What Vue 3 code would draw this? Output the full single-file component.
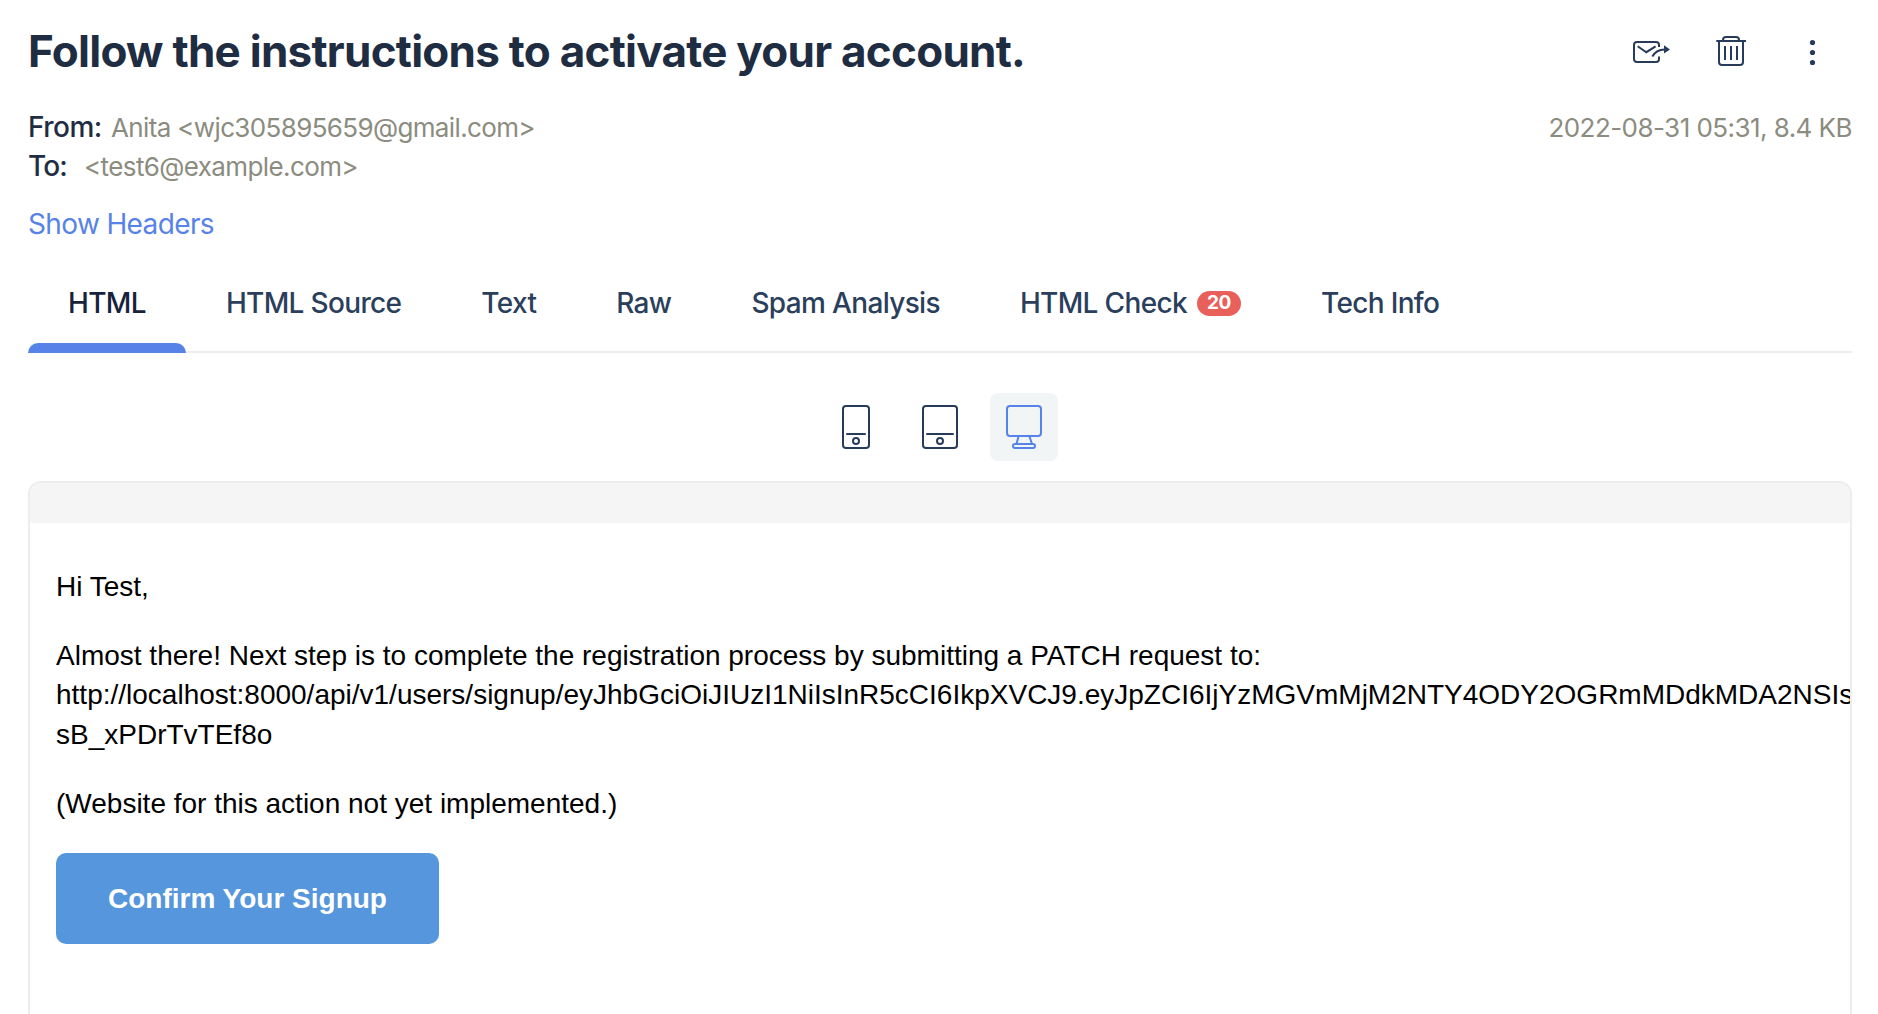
<script setup>
const tabs = [
  { label: 'HTML', active: true },
  { label: 'HTML Source' },
  { label: 'Text' },
  { label: 'Raw' },
  { label: 'Spam Analysis' },
  { label: 'HTML Check', badge: 20 },
  { label: 'Tech Info' },
]
const url =
  'http://localhost:8000/api/v1/users/signup/eyJhbGciOiJIUzI1NiIsInR5cCI6IkpXVCJ9.eyJpZCI6IjYzMGVmMjM2NTY4ODY2OGRmMDdkMDA2NSIs'
</script>

<template>
  <main class="page">
    <header class="head">
      <h1>Follow the instructions to activate your account.</h1>
      <div class="actions">
        <button aria-label="Forward">
          <svg width="40" height="40" viewBox="-2 0 40 40">
            <path d="M27 15V13a3 3 0 0 0-3-3H5a3 3 0 0 0-3 3v14a3 3 0 0 0 3 3h19a3 3 0 0 0 3-3v-2.5" />
            <path d="M5.7 14.3 14.3 20.2 23.6 14.3" />
            <path d="M20.3 24.4C22.8 20.2 27 17.4 32.5 17.4" />
            <path class="solid" d="M32 13.2 38 17.4 32 21.6z" />
          </svg>
        </button>
        <button aria-label="Delete">
          <svg width="40" height="40" viewBox="0 0 40 40">
            <path d="M5.3 9h29.700M12 9V8a3 3 0 0 1 3-3h10a3 3 0 0 1 3 3v1M8 9v21a3 3 0 0 0 3 3h18a3 3 0 0 0 3-3V9M14 14v14M20 14v14M26 14v14" />
          </svg>
        </button>
        <button aria-label="More">
          <svg width="40" height="40" viewBox="0 0 40 40">
            <circle class="dot" cx="20.5" cy="10.5" r="2.6" />
            <circle class="dot" cx="20.5" cy="20.5" r="2.6" />
            <circle class="dot" cx="20.5" cy="30.5" r="2.6" />
          </svg>
        </button>
      </div>
    </header>

    <section class="meta">
      <dl>
        <div class="from"><dt>From:</dt><dd>Anita &lt;wjc305895659@gmail.com&gt;</dd></div>
        <div class="to"><dt>To:</dt><dd>&lt;test6@example.com&gt;</dd></div>
      </dl>
      <span class="date">2022-08-31 05:31, 8.4 KB</span>
    </section>
    <a class="show">Show Headers</a>

    <nav class="tabs">
      <a v-for="t in tabs" :key="t.label" class="tab" :class="{ active: t.active }">
        <span>{{ t.label }}</span>
        <span v-if="t.badge" class="badge">{{ t.badge }}</span>
      </a>
    </nav>

    <div class="devices">
      <button aria-label="Phone">
        <svg width="68" height="68" viewBox="0 0 68 68">
          <rect x="21" y="13" width="26" height="42" rx="3" />
          <path d="M25 41h18" stroke-linecap="round" />
          <circle cx="34" cy="48" r="3" />
        </svg>
      </button>
      <button aria-label="Tablet">
        <svg width="68" height="68" viewBox="0 0 68 68">
          <rect x="17" y="13" width="34" height="42" rx="3" />
          <path d="M21 41h26" stroke-linecap="round" />
          <circle cx="34" cy="48" r="3" />
        </svg>
      </button>
      <button class="on" aria-label="Desktop">
        <svg width="68" height="68" viewBox="0 0 68 68">
          <rect x="17" y="13" width="34" height="30" rx="3" />
          <path d="M28.5 43.5 26.5 51M39.5 43.5 42 51" />
          <rect x="23" y="51" width="22" height="4" rx="2" />
        </svg>
      </button>
    </div>

    <article class="panel">
      <div class="bar"></div>
      <div class="mail">
        <p>Hi Test,</p>
        <p>
          Almost there! Next step is to complete the registration process by submitting a PATCH request to:<br />
          {{ url }}<br />
          sB_xPDrTvTEf8o
        </p>
        <p>(Website for this action not yet implemented.)</p>
        <a class="cta">Confirm Your Signup</a>
      </div>
    </article>
  </main>
</template>

<style>
body { background: #fff; overflow: hidden; }
</style>

<style scoped>
.page {
  box-sizing: border-box;
  width: 100%;
  height: 1014px;
  padding: 24px 26px 0 28px;
  overflow: hidden;
  display: flex;
  flex-direction: column;
  font-family: Inter, sans-serif;
  font-size: 28px;
  color: #1f2d42;
}
button { padding: 0; border: 0; background: none; display: block; }
svg { display: block; fill: none; stroke: #273c5a; stroke-width: 2; }
.head { display: flex; justify-content: space-between; height: 56px; }
h1 { margin: 0; font-size: 44px; line-height: 54px; font-weight: 700; letter-spacing: -0.74px; white-space: nowrap; }
.actions { display: flex; align-items: flex-start; gap: 41px; padding: 8px 20px 0 0; }
.solid, .dot { fill: #273c5a; stroke: none; }
.meta { display: flex; justify-content: space-between; margin-top: 30px; line-height: 39px; }
dl, dd { margin: 0; }
dl div { display: flex; }
dt { font-weight: 500; letter-spacing: -0.5px; }
dd, .date { font-size: 26px; color: #8b8c7f; white-space: nowrap; }
.from dt { width: 83px; }
.from dd { letter-spacing: -0.64px; }
.to dt { width: 56px; letter-spacing: -0.9px; }
.to dd { letter-spacing: -0.61px; }
.date { letter-spacing: -0.55px; }
.show { margin-top: 19px; line-height: 39px; letter-spacing: -0.63px; color: #5783e8; }
.tabs { display: flex; flex: none; height: 78px; margin-top: 29px; border-bottom: 2px solid #ededed; }
.tab {
  position: relative;
  display: flex;
  align-items: flex-start;
  gap: 10px;
  padding: 10px 40px 0;
  font-weight: 500;
  line-height: 40px;
  letter-spacing: -0.66px;
  color: #2b3f5c;
  white-space: nowrap;
}
.tab.active { color: #17233a; }
.tab.active::after {
  content: '';
  position: absolute;
  left: 0;
  right: 0;
  bottom: -2px;
  height: 10px;
  border-radius: 10px 10px 0 0;
  background: #5783e8;
}
.badge {
  width: 44px;
  height: 25px;
  margin-top: 8px;
  border-radius: 13px;
  background: #e95f5a;
  color: #fff;
  font-size: 19px;
  font-weight: 700;
  line-height: 24px;
  letter-spacing: -0.5px;
  text-align: center;
}
.devices { display: flex; justify-content: center; gap: 16px; margin-top: 40px; }
.devices .on { border-radius: 8px; background: #f2f5f6; }
.devices .on svg { stroke: #5783e8; }
.panel {
  flex: none;
  height: 560px;
  margin-top: 20px;
  border: 2px solid #ededed;
  border-radius: 13px;
  overflow: hidden;
}
.bar { height: 40px; background: #f5f5f5; }
.mail {
  padding: 44px 0 0 26px;
  font-family: 'Liberation Sans', Arial, sans-serif;
  line-height: 39.2px;
  color: #000;
  white-space: nowrap;
}
.mail p { margin: 0 0 30px; }
.cta {
  display: inline-block;
  padding: 26px 52px;
  border-radius: 10px;
  background: #5696dc;
  color: #fff;
  font-weight: 700;
}
</style>
